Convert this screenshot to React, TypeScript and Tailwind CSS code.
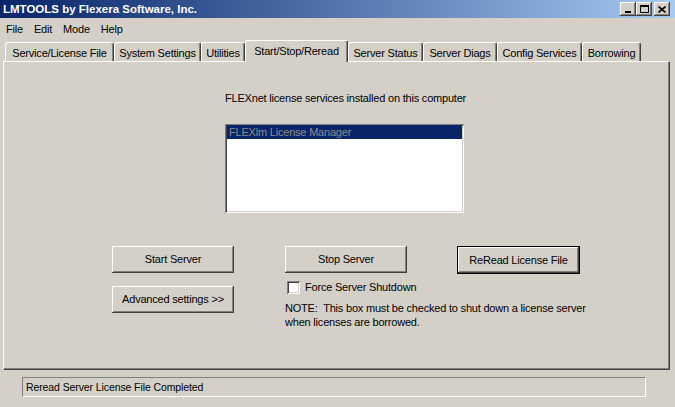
import React from "react";

const raised =
  "shadow-[inset_-1px_-1px_0_#404040,inset_1px_1px_0_#ffffff,inset_-2px_-2px_0_#808080,inset_2px_2px_0_#d4d0c8]";
const sunken =
  "shadow-[inset_1px_1px_0_#808080,inset_-1px_-1px_0_#ffffff,inset_2px_2px_0_#404040,inset_-2px_-2px_0_#d4d0c8]";

const tabs = [
  { label: "Service/License File", w: "w-[109px]" },
  { label: "System Settings", w: "w-[87px]" },
  { label: "Utilities", w: "w-[44px]" },
  { label: "Start/Stop/Reread", w: "w-[103px]", active: true },
  { label: "Server Status", w: "w-[75px]" },
  { label: "Server Diags", w: "w-[74px]" },
  { label: "Config Services", w: "w-[85px]" },
  { label: "Borrowing", w: "w-[59px]" },
];

const WinButton = ({ children }: { children: React.ReactNode }) => (
  <div className={`w-[16px] h-[14px] bg-[#d4d0c8] flex items-center justify-center ${raised}`}>
    {children}
  </div>
);

const Button = ({ label, isDefault }: { label: string; isDefault?: boolean }) => (
  <div
    className={`w-[122px] h-[27px] shrink-0 flex items-center justify-center bg-[#d4d0c8] text-black ${raised} ${
      isDefault ? "border border-black w-[123px] h-[28px]" : ""
    }`}
  >
    {label}
  </div>
);

export default function App() {
  return (
    <div className="w-[675px] h-[407px] bg-[#d4d0c8] overflow-hidden font-['Liberation_Sans',Arial,sans-serif] text-[11px] tracking-[-0.2px] text-black leading-[13px]">
      {/* Title bar */}
      <div className="h-[18px] flex items-center justify-between bg-linear-to-r from-[#0a246a] to-[#a6caf0] pl-[3px] pr-[5px]">
        <span className="text-white font-bold text-[11.5px] tracking-normal">
          LMTOOLS by Flexera Software, Inc.
        </span>
        <div className="flex items-center">
          <WinButton>
            <div className="w-[6px] h-[2px] bg-black mt-[6px] mr-[1px]" />
          </WinButton>
          <WinButton>
            <div className="w-[9px] h-[8px] border border-black border-t-2" />
          </WinButton>
          <div className="ml-[2px]">
            <WinButton>
              <svg width="8" height="7" viewBox="0 0 8 7">
                <path d="M0.5 0.5 L7.5 6.5 M7.5 0.5 L0.5 6.5" stroke="#000" strokeWidth="1.6" />
              </svg>
            </WinButton>
          </div>
        </div>
      </div>

      {/* Menu bar */}
      <div className="h-[22px] flex items-center gap-[11px] pl-[6px]">
        <span>File</span>
        <span>Edit</span>
        <span>Mode</span>
        <span>Help</span>
      </div>

      {/* Tabs */}
      <div className="relative z-10 flex items-end h-[22px] pl-[5px] -mb-px">
        {tabs.map((t) =>
          t.active ? (
            <div
              key={t.label}
              className={`${t.w} h-[22px] bg-[#d4d0c8] border-t border-l border-white border-r border-r-[#404040] shadow-[inset_-1px_0_0_#808080] rounded-t-[3px] flex justify-center pt-[4px]`}
            >
              {t.label}
            </div>
          ) : (
            <div
              key={t.label}
              className={`${t.w} h-[19px] mb-px bg-[#d4d0c8] border-t border-l border-white border-r border-r-[#404040] shadow-[inset_-1px_0_0_#808080] rounded-t-[3px] flex justify-center pt-[4px]`}
            >
              {t.label}
            </div>
          )
        )}
      </div>

      {/* Panel */}
      <div className="ml-[3px] w-[667px] h-[309px] border-t border-l border-white border-r border-b border-r-[#404040] border-b-[#404040] shadow-[inset_-1px_-1px_0_#808080] pt-[30px]">
        <div className="pl-[221px]">FLEXnet license services installed on this computer</div>

        <div className={`ml-[221px] mt-[19px] w-[239px] h-[89px] bg-white p-[2px] ${sunken}`}>
          <div className="h-[14px] -mt-px bg-[#0a246a] text-[#8c8c8c] pl-[2px] flex items-center">
            FLEXlm License Manager
          </div>
        </div>

        <div className="flex pl-[108px] mt-[33px]">
          <div className="flex flex-col gap-[13px]">
            <Button label="Start Server" />
            <Button label="Advanced settings >>" />
          </div>

          <div className="ml-[51px] w-[122px] flex flex-col">
            <Button label="Stop Server" />
            <div className="flex items-center mt-[8px] ml-[2px] whitespace-nowrap">
              <div className={`w-[13px] h-[13px] shrink-0 bg-white ${sunken}`} />
              <span className="ml-[5px]">Force Server Shutdown</span>
            </div>
            <div className="mt-[7px] whitespace-nowrap leading-[14px]">
              NOTE:&nbsp; This box must be checked to shut down a license server
              <br />
              when licenses are borrowed.
            </div>
          </div>

          <div className="ml-[50px]">
            <Button label="ReRead License File" isDefault />
          </div>
        </div>
      </div>

      {/* Status bar */}
      <div className="mt-[7px] ml-[22px] w-[624px] h-[20px] border-t border-l border-[#808080] border-r border-b border-r-white border-b-white flex items-center pl-[3px] text-[10.5px] tracking-[-0.1px]">
        Reread Server License File Completed
      </div>
    </div>
  );
}
